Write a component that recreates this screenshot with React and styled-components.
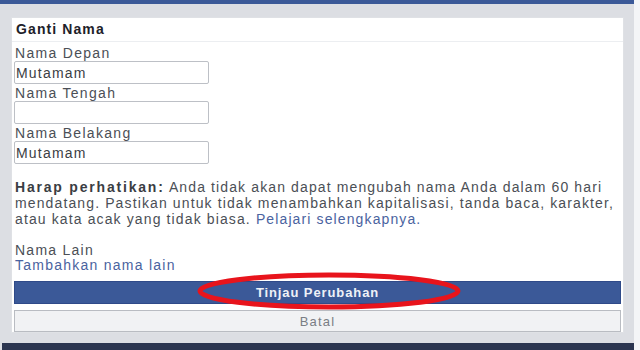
import React from "react";
import styled, { createGlobalStyle } from "styled-components";

const GlobalStyle = createGlobalStyle`
  html, body {
    margin: 0;
    padding: 0;
    background: #f4f5f7;
  }
  body {
    font-family: "Liberation Sans", Arial, sans-serif;
  }
`;

const Frame = styled.div`
  width: 634px;
  height: 350px;
  display: flex;
  flex-direction: column;
  background: #dcdee3;
`;

const TopBar = styled.div`
  height: 4px;
  background: #3b5998;
`;

const Body = styled.div`
  flex: 1;
  padding: 13px 10px 10px 11px;
  display: flex;
`;

const Card = styled.div`
  flex: 1;
  background: #fff;
  border: 1px solid #dfe1e5;
  display: flex;
  flex-direction: column;
`;

const Header = styled.div`
  height: 23px;
  line-height: 23px;
  padding: 0 4px;
  font-size: 14px;
  font-weight: bold;
  letter-spacing: 1.1px;
  color: #1d2129;
  border-bottom: 1px solid #eceef1;
`;

const Content = styled.div`
  position: relative;
  padding: 2px 2px 0 2px;
  display: flex;
  flex-direction: column;
  color: #4b4f56;
  font-size: 14px;
  letter-spacing: 1.12px;
`;

const Label = styled.div`
  height: 17px;
  line-height: 18px;
  padding-left: 1px;
  letter-spacing: 1.3px;
  color: #4b4f56;
`;

const TextInput = styled.input`
  box-sizing: border-box;
  width: 195px;
  height: 23px;
  margin: 0;
  padding: 0 1px;
  border: 1px solid #bdc0c6;
  border-radius: 2px;
  font-family: inherit;
  font-size: 14px;
  letter-spacing: 1.2px;
  color: #3b3e44;
  background: #fff;
  outline: none;
`;

const Note = styled.p`
  margin: 15px 0 0 1px;
  line-height: 16px;
  white-space: nowrap;
  color: #4b4f56;
`;

const Bold = styled.b`
  color: #3a3d43;
  letter-spacing: 1.8px;
`;

const Link = styled.a`
  color: #4a63a0;
  text-decoration: none;
`;

const Section = styled.div`
  margin-top: 16px;
  padding-left: 1px;
  line-height: 15px;
  letter-spacing: 1.25px;
  display: flex;
  flex-direction: column;
`;

const Button = styled.button`
  box-sizing: border-box;
  width: 100%;
  margin: 0;
  height: ${p => (p.primary ? "23px" : "22px")};
  border: 1px solid ${p => (p.primary ? "#2f4a89" : "#b9bcc2")};
  background: ${p => (p.primary ? "#3b5998" : "#f1f2f4")};
  color: ${p => (p.primary ? "#eef1f7" : "#7a7e85")};
  font-family: inherit;
  font-size: 13px;
  letter-spacing: ${p => (p.primary ? "0.9px" : "1.2px")};
  font-weight: ${p => (p.primary ? "bold" : "normal")};
  cursor: pointer;
`;

const Actions = styled.div`
  margin-top: 8px;
  display: flex;
  flex-direction: column;
  gap: 6px;
`;

const ButtonWrap = styled.div`
  position: relative;
`;

const Highlight = styled.svg`
  position: absolute;
  left: 181px;
  top: -10px;
  pointer-events: none;
`;

const BottomBar = styled.div`
  height: 7px;
  margin-left: 2px;
  background: #2b3550;
`;

export default function App() {
  return (
    <>
      <GlobalStyle />
      <Frame>
        <TopBar />
        <Body>
          <Card>
            <Header>Ganti Nama</Header>
            <Content>
              <Label>Nama Depan</Label>
              <TextInput defaultValue="Mutamam" />
              <Label>Nama Tengah</Label>
              <TextInput defaultValue="" />
              <Label>Nama Belakang</Label>
              <TextInput defaultValue="Mutamam" />
              <Note>
                <Bold>Harap perhatikan:</Bold> Anda tidak akan dapat mengubah nama Anda dalam 60 hari
                <br />
                mendatang. Pastikan untuk tidak menambahkan kapitalisasi, tanda baca, karakter,
                <br />
                atau kata acak yang tidak biasa. <Link href="#">Pelajari selengkapnya.</Link>
              </Note>
              <Section>
                <span>Nama Lain</span>
                <Link href="#">Tambahkan nama lain</Link>
              </Section>
              <Actions>
                <ButtonWrap>
                  <Button primary>Tinjau Perubahan</Button>
                  <Highlight width="268" height="40" viewBox="0 0 268 40">
                    <ellipse cx="134" cy="20" rx="129" ry="16" fill="none" stroke="#e8141c" strokeWidth="5" />
                  </Highlight>
                </ButtonWrap>
                <Button>Batal</Button>
              </Actions>
            </Content>
          </Card>
        </Body>
        <BottomBar />
      </Frame>
    </>
  );
}
